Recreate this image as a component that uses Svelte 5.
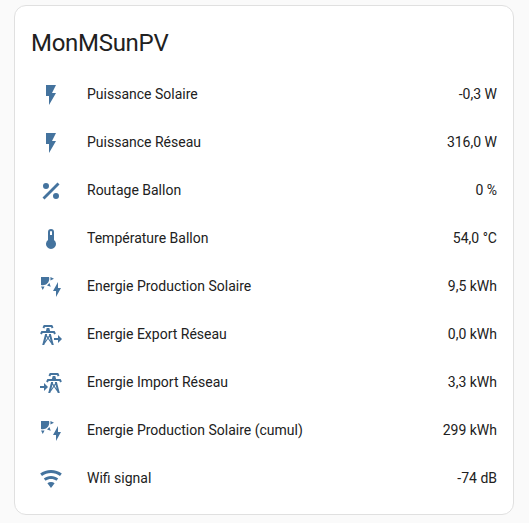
<script>
  const paths = {
    flash: 'M7 2v11h3v9l7-12h-4l4-8z',
    percent: 'M18.5 3.5L20.5 5.5L5.5 20.5L3.5 18.5L18.5 3.5M7 4A3 3 0 0 1 10 7A3 3 0 0 1 7 10A3 3 0 0 1 4 7A3 3 0 0 1 7 4M17 14A3 3 0 0 1 20 17A3 3 0 0 1 17 20A3 3 0 0 1 14 17A3 3 0 0 1 17 14Z',
    thermometer: 'M15 13V5A3 3 0 0 0 9 5V13A5 5 0 1 0 15 13M12 4A1 1 0 0 1 13 5V8H11V5A1 1 0 0 1 12 4Z',
    solar: 'M11.45 2V5.55L15 3.77L11.45 2M10.45 8L8 10.46L11.75 11.71L10.45 8M2 11.45L3.77 15L5.55 11.45H2M10 2H2V10C2.57 10.17 3.17 10.25 3.77 10.25C7.35 10.26 10.26 7.35 10.27 3.75C10.26 3.16 10.17 2.57 10 2M17 22V16H14L19 7V13H22L17 22Z',
    tower: 'M8.28 5.45L6.5 4.55L7.76 2H16.23L17.5 4.55L15.72 5.44L15 4H9L8.28 5.45M18.62 8H14.09L13.3 5H10.7L9.91 8H5.38L4.1 10.55L5.89 11.44L6.62 10H17.38L18.1 11.45L19.89 10.56L18.62 8M17.77 22H15.7L15.46 21.1L12 15.9L8.53 21.1L8.3 22H6.23L9.12 11H11.19L10.83 12.35L12 14.1L13.16 12.35L12.81 11H14.88L17.77 22M11.4 15L10.5 13.65L9.32 18.13L11.4 15M14.68 18.12L13.5 13.64L12.6 15L14.68 18.12Z',
    wifi: 'M12,21L15.6,16.2C14.6,15.45 13.35,15 12,15C10.65,15 9.4,15.45 8.4,16.2L12,21M12,3C7.95,3 4.21,4.34 1.2,6.6L3,9C5.5,7.12 8.62,6 12,6C15.38,6 18.5,7.12 21,9L22.8,6.6C19.79,4.34 16.05,3 12,3M12,9C9.3,9 6.81,9.89 4.8,11.4L6.6,13.8C8.1,12.67 9.97,12 12,12C14.03,12 15.9,12.67 17.4,13.8L19.2,11.4C17.19,9.89 14.7,9 12,9Z'
  };
  const rows = [
    ['flash', 'Puissance Solaire', '-0,3 W'],
    ['flash', 'Puissance Réseau', '316,0 W'],
    ['percent', 'Routage Ballon', '0 %'],
    ['thermometer', 'Température Ballon', '54,0 °C'],
    ['solar', 'Energie Production Solaire', '9,5 kWh'],
    ['export', 'Energie Export Réseau', '0,0 kWh'],
    ['import', 'Energie Import Réseau', '3,3 kWh'],
    ['solar', 'Energie Production Solaire (cumul)', '299 kWh'],
    ['wifi', 'Wifi signal', '-74 dB']
  ];
</script>

<main>
  <section class="card">
    <h1>MonMSunPV</h1>
    <div class="rows">
      {#each rows as [icon, name, value]}
        <div class="row">
          <svg viewBox="0 0 24 24" aria-hidden="true">
            {#if icon === 'export'}
              <g transform="translate(-3 0)"><path d={paths.tower} /></g>
              <path d="M19 12v3h-4v2h4v3l4-4z" />
            {:else if icon === 'import'}
              <g transform="translate(3 0)"><path d={paths.tower} /></g>
              <path d="M5 12v3H1v2h4v3l4-4z" />
            {:else}
              <path d={paths[icon]} />
            {/if}
          </svg>
          <span class="name">{name}</span>
          <span class="value">{value}</span>
        </div>
      {/each}
    </div>
  </section>
</main>

<style>
  :global(body) { background: #fafafa; }
  main { height: 523px; box-sizing: border-box; padding: 5px 15px 8px 14px; font-family: Roboto, sans-serif; color: #212121; }
  .card { height: 510px; box-sizing: border-box; border: 1px solid #e0e0e0; border-radius: 12px; background: #fff; }
  h1 { margin: 0; padding: 13px 16px 0; font-size: 24px; font-weight: 400; line-height: 48px; letter-spacing: -0.288px; height: 48px; box-sizing: border-box; }
  .rows { padding: 20px 16px 0; }
  .row { display: flex; align-items: center; height: 40px; margin-bottom: 8px; font-size: 14px; line-height: 20px; }
  svg { width: 24px; height: 24px; margin: 2px 24px 0 8px; fill: #44739e; flex: none; }
  .name { flex: 1; }
  .value { white-space: nowrap; }
</style>
